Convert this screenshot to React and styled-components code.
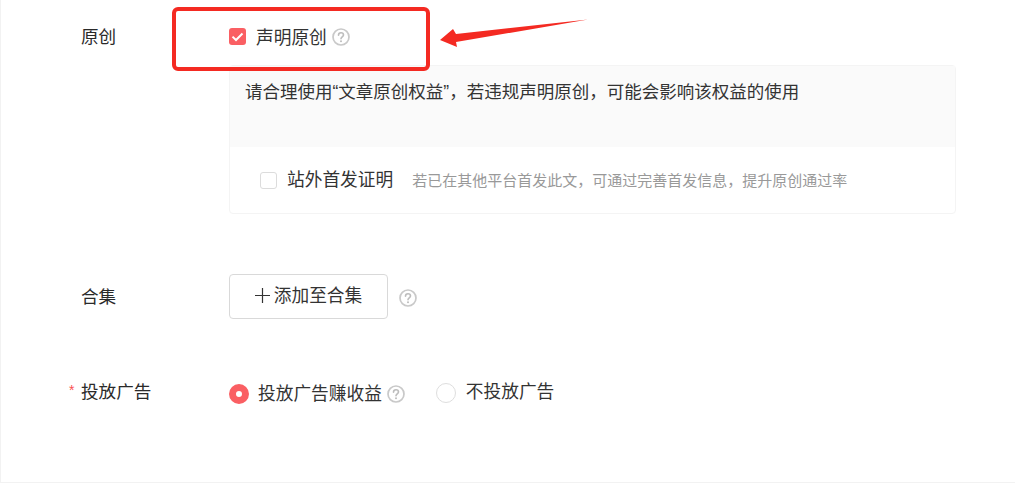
import React from 'react';
import styled, { createGlobalStyle } from 'styled-components';

const GlobalStyle = createGlobalStyle`
  html, body {
    margin: 0;
    padding: 0;
    background: #fff;
  }
  body {
    font-family: "Liberation Sans", "Noto Sans CJK SC", sans-serif;
    color: #222;
  }
`;

const Page = styled.div`
  position: relative;
  width: 1015px;
  height: 483px;
  box-sizing: border-box;
  padding-left: 68px;
  border-left: 1px solid #f2f2f2;
  border-bottom: 1px solid #f2f2f2;
  overflow: hidden;
`;

const Row = styled.div`
  display: grid;
  grid-template-columns: 160px 727px;
  margin-top: ${props => props.$top}px;
`;

const Label = styled.div`
  display: flex;
  align-items: center;
  height: ${props => props.$height}px;
  box-sizing: content-box;
  padding-bottom: 2px;
  font-size: 17.6px;
  color: #2a2a2a;
`;

const Star = styled.span`
  width: 12px;
  height: 12px;
  line-height: 14px;
  font-size: 14px;
  color: #fa5151;
  align-self: flex-start;
  margin-top: 8px;
`;

const LabelGap = styled.span`
  width: 12px;
`;

const Inline = styled.div`
  display: flex;
  align-items: center;
  height: ${props => props.$height}px;
`;

const CheckBox = styled.span`
  flex: none;
  width: 17px;
  height: 17px;
  box-sizing: border-box;
  border-radius: 3px;
  display: flex;
  align-items: center;
  justify-content: center;
  background: ${props => (props.$checked ? '#fa5f63' : '#fff')};
  border: ${props => (props.$checked ? 'none' : '1px solid #dcdcdc')};
`;

const OptionText = styled.span`
  font-size: 17.7px;
  color: #333;
  padding-bottom: 2px;
  margin-left: ${props => props.$left}px;
  margin-top: ${props => props.$top || 0}px;
`;

const HelpWrap = styled.span`
  display: inline-flex;
  flex: none;
  margin-left: ${props => props.$left}px;
  margin-top: ${props => props.$top || 0}px;
`;

const Panel = styled.div`
  width: 727px;
  height: 149px;
  box-sizing: border-box;
  border: 1px solid #f4f4f4;
  border-radius: 4px;
  margin-top: 8px;
`;

const Notice = styled.div`
  height: 81px;
  box-sizing: border-box;
  background: #fafafa;
  padding: 13px 15px;
  font-size: 17.5px;
  line-height: 26px;
  color: #333;
`;

const ProofRow = styled.div`
  display: flex;
  align-items: center;
  height: 66px;
  padding-left: 30px;
`;

const ProofHint = styled.span`
  font-size: 15px;
  color: #999;
  padding-bottom: 2px;
  margin-left: 19px;
`;

const AddButton = styled.button`
  width: 159px;
  height: 45px;
  box-sizing: border-box;
  display: flex;
  align-items: center;
  justify-content: center;
  gap: 4px;
  padding: 0 0 5px;
  border: 1px solid #d9d9d9;
  border-radius: 4px;
  background: #fff;
  font-family: inherit;
  font-size: 17.7px;
  color: #333;
`;

const PlusIcon = styled.svg`
  margin-top: 3px;
`;

const Radio = styled.span`
  flex: none;
  width: 20px;
  height: 20px;
  box-sizing: border-box;
  border-radius: 50%;
  background: #fff;
  border: ${props => (props.$checked ? '7px solid #fa5f63' : '1px solid #dedede')};
  margin-left: ${props => props.$left || 0}px;
  margin-top: ${props => props.$top || 0}px;
`;

const Highlight = styled.div`
  position: absolute;
  left: 171px;
  top: 7px;
  width: 258px;
  height: 64px;
  box-sizing: border-box;
  border: 4px solid #f42a22;
  border-radius: 6px;
`;

const Arrow = styled.svg`
  position: absolute;
  left: 438px;
  top: 16px;
`;

const HelpIcon = ({ size = 18 }) => (
  <svg width={size} height={size} viewBox="0 0 18 18" fill="none">
    <circle cx="9" cy="9" r="8" stroke="#c9c9c9" strokeWidth="1.7" />
    <path
      d="M6.5 7.2c0-1.4 1.1-2.4 2.5-2.4s2.5 1 2.5 2.2c0 1.9-2.5 2-2.5 3.8"
      stroke="#bdbdbd"
      strokeWidth="1.6"
      strokeLinecap="round"
    />
    <circle cx="9" cy="13.3" r="1" fill="#bdbdbd" />
  </svg>
);

const Tick = () => (
  <svg width="13" height="10" viewBox="0 0 13 10" fill="none">
    <path d="M1.5 4.6 5 8 11.5 1.5" stroke="#fff" strokeWidth="2" />
  </svg>
);

const Plus = () => (
  <PlusIcon width="15" height="15" viewBox="0 0 15 15" fill="none">
    <path d="M7.5 0v15M0 7.5h15" stroke="#333" strokeWidth="1.2" />
  </PlusIcon>
);

const App = () => (
  <>
    <GlobalStyle />
    <Page>
      <Row $top={16}>
        <Label $height={38}>
          <LabelGap />
          原创
        </Label>
        <div>
          <Inline $height={41}>
            <CheckBox $checked>
              <Tick />
            </CheckBox>
            <OptionText $left={10}>声明原创</OptionText>
            <HelpWrap $left={5}>
              <HelpIcon />
            </HelpWrap>
          </Inline>
          <Panel>
            <Notice>请合理使用“文章原创权益”，若违规声明原创，可能会影响该权益的使用</Notice>
            <ProofRow>
              <CheckBox />
              <OptionText $left={10} $top={-2}>站外首发证明</OptionText>
              <ProofHint>若已在其他平台首发此文，可通过完善首发信息，提升原创通过率</ProofHint>
            </ProofRow>
          </Panel>
        </div>
      </Row>
      <Row $top={60}>
        <Label $height={43}>
          <LabelGap />
          合集
        </Label>
        <Inline $height={45}>
          <AddButton>
            <Plus />
            添加至合集
          </AddButton>
          <HelpWrap $left={11} $top={3}>
            <HelpIcon />
          </HelpWrap>
        </Inline>
      </Row>
      <Row $top={56}>
        <Label $height={30}>
          <Star>*</Star>
          投放广告
        </Label>
        <Inline $height={34}>
          <Radio $checked $top={3} />
          <OptionText $left={9} $top={2}>投放广告赚收益</OptionText>
          <HelpWrap $left={5} $top={4}>
            <HelpIcon />
          </HelpWrap>
          <Radio $left={31} $top={1} />
          <OptionText $left={10} $top={-2}>不投放广告</OptionText>
        </Inline>
      </Row>
      <Highlight />
      <Arrow width="150" height="34" viewBox="0 0 150 34">
        <path d="M1 24 14 13 17 18 149 3.5 17 26 18 31Z" fill="#f42a22" />
      </Arrow>
    </Page>
  </>
);

export default App;
